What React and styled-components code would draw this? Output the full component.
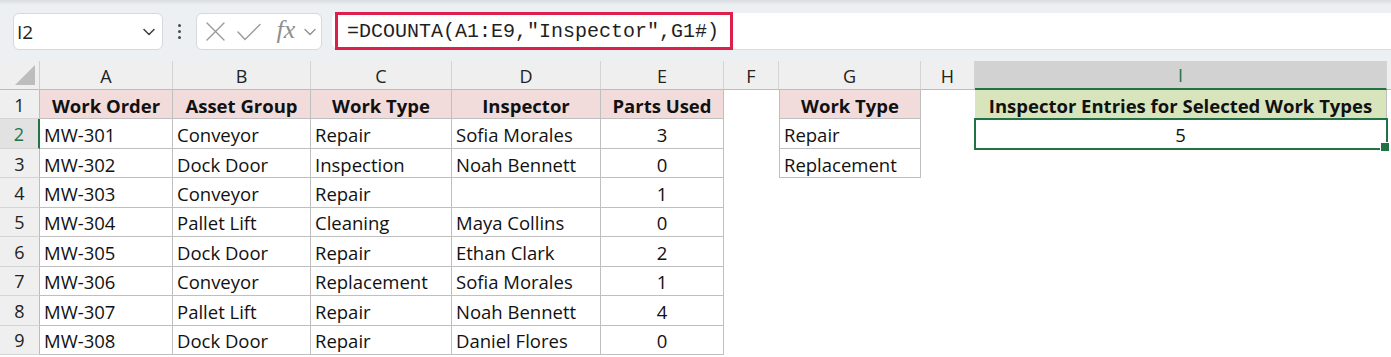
import React from "react";
import styled, { createGlobalStyle, css } from "styled-components";

const GlobalStyle = createGlobalStyle`
  html, body { margin: 0; padding: 0; background: #ffffff; }
  body { font-family: "Open Sans", "Noto Sans", sans-serif; color: #1f1f1f; overflow: hidden; }
  * { box-sizing: border-box; }
`;

const GREEN = "#217346";
const GRID = "#bfbfbf";

const Page = styled.div`
  width: 1391px;
  height: 357px;
  overflow: hidden;
  background: #fff;
`;

const Toolbar = styled.div`
  height: 61px;
  display: flex;
  align-items: flex-start;
  padding: 13px 0 0 13px;
  background: linear-gradient(#d9dcdf 0px, #e6e9ec 3px, #edf0f3 5px, #edf0f3 100%);
`;

const NameBox = styled.div`
  width: 150px;
  height: 37px;
  background: #fff;
  border: 1px solid #d6d9dc;
  border-radius: 6px;
  display: flex;
  align-items: center;
  justify-content: space-between;
  padding: 0 6px 0 3px;
  font-size: 19px;
  color: #222;
`;

const Dots = styled.div`
  width: 33px;
  height: 37px;
  display: flex;
  flex-direction: column;
  align-items: center;
  justify-content: center;
  gap: 3px;
  span {
    width: 3px;
    height: 3px;
    border-radius: 50%;
    background: #4a4a4a;
  }
`;

const FxBox = styled.div`
  width: 126px;
  height: 37px;
  background: #fff;
  border: 1px solid #d6d9dc;
  border-radius: 6px;
  display: flex;
  align-items: center;
  padding-left: 5px;
`;

const IconSlot = styled.div`
  width: ${(p) => p.$w}px;
  height: 37px;
  display: flex;
  align-items: center;
  justify-content: center;
`;

const Fx = styled.span`
  font-family: "Liberation Serif", "DejaVu Serif", serif;
  font-style: italic;
  font-size: 26px;
  color: #8f8f8f;
  line-height: 1;
  margin-top: -4px;
`;

const FormulaArea = styled.div`
  flex: 1;
  margin-left: 10px;
  height: 37px;
  background: #fff;
  border-radius: 6px 0 0 6px;
  border-bottom: 1px solid #d9dcdf;
  display: flex;
  align-items: stretch;
  padding-left: 3px;
`;

const Highlight = styled.div`
  width: 398px;
  height: 38px;
  margin-top: -1px;
  border: 3px solid #dc1f4b;
  display: flex;
  align-items: center;
  padding-left: 9px;
  font-family: "Liberation Mono", "DejaVu Sans Mono", monospace;
  font-size: 20px;
  color: #1f1f1f;
  white-space: pre;
`;

const Sheet = styled.div`
  display: grid;
  grid-template-columns: 40px 133px 138px 141px 149px 123px 55px 142px 54px 412px 1fr;
  grid-template-rows: 29px repeat(9, 29.45px);
`;

const cellText = css`
  font-size: 18.5px;
  white-space: nowrap;
  overflow: hidden;
`;

const Corner = styled.div`
  background: #efefef;
  border-right: 1px solid #cfcfcf;
  border-bottom: 1px solid #bcbcbc;
  position: relative;
  &::after {
    content: "";
    position: absolute;
    right: 4px;
    bottom: 4px;
    width: 0;
    height: 0;
    border-left: 20px solid transparent;
    border-bottom: 20px solid #bdbdbd;
  }
`;

const ColHead = styled.div`
  ${cellText}
  font-size: 18px;
  background: ${(p) => (p.$active ? "#d2d2d2" : "#efefef")};
  color: ${(p) => (p.$active ? GREEN : "#222")};
  border-right: 1px solid #d4d4d4;
  border-bottom: ${(p) => (p.$active ? `2px solid ${GREEN}` : "1px solid #bcbcbc")};
  display: flex;
  align-items: center;
  justify-content: center;
  padding-top: 1px;
`;

const RowHead = styled.div`
  ${cellText}
  font-size: 18px;
  background: ${(p) => (p.$active ? "#e2e2e2" : "#efefef")};
  color: ${(p) => (p.$active ? GREEN : "#222")};
  border-right: ${(p) => (p.$active ? `2px solid ${GREEN}` : "1px solid #bcbcbc")};
  border-bottom: 1px solid #d4d4d4;
  display: flex;
  align-items: center;
  justify-content: center;
  padding-top: 1px;
`;

const Cell = styled.div`
  ${cellText}
  display: flex;
  align-items: center;
  padding: 2px 4px 0 4px;
  justify-content: ${(p) => (p.$align === "center" ? "center" : "flex-start")};
  font-weight: ${(p) => (p.$bold ? 700 : 400)};
  background: ${(p) => p.$bg || "#fff"};
  color: #111;
  ${(p) =>
    p.$border &&
    css`
      border-right: 1px solid ${GRID};
      border-bottom: 1px solid ${GRID};
    `}
  ${(p) =>
    p.$bl &&
    css`
      border-left: 1px solid ${GRID};
    `}
  ${(p) =>
    p.$selected &&
    css`
      position: relative;
      z-index: 2;
      overflow: visible;
      outline: 2px solid ${GREEN};
      outline-offset: -1px;
      &::after {
        content: "";
        position: absolute;
        right: -4px;
        bottom: -4px;
        width: 8px;
        height: 8px;
        background: ${GREEN};
        border: 1px solid #fff;
      }
    `}
`;

const columns = ["A", "B", "C", "D", "E", "F", "G", "H", "I", ""];

const mainRows = [
  ["MW-301", "Conveyor", "Repair", "Sofia Morales", "3"],
  ["MW-302", "Dock Door", "Inspection", "Noah Bennett", "0"],
  ["MW-303", "Conveyor", "Repair", "", "1"],
  ["MW-304", "Pallet Lift", "Cleaning", "Maya Collins", "0"],
  ["MW-305", "Dock Door", "Repair", "Ethan Clark", "2"],
  ["MW-306", "Conveyor", "Replacement", "Sofia Morales", "1"],
  ["MW-307", "Pallet Lift", "Repair", "Noah Bennett", "4"],
  ["MW-308", "Dock Door", "Repair", "Daniel Flores", "0"],
];

const headers = ["Work Order", "Asset Group", "Work Type", "Inspector", "Parts Used"];
const criteria = ["Repair", "Replacement"];

const PINK = "#f2dcdb";
const LIME = "#d8e4bc";

function Chevron({ color = "#444", w = 14, sw = 1.6 }) {
  return (
    <svg width={w} height={w} viewBox="0 0 14 14" fill="none">
      <polyline points="2,4.5 7,9.5 12,4.5" stroke={color} strokeWidth={sw} strokeLinecap="round" strokeLinejoin="round" />
    </svg>
  );
}

function Row({ r }) {
  const cells = [];
  if (r === 1) {
    headers.forEach((h, i) =>
      cells.push(
        <Cell key={"h" + i} $border $bold $align="center" $bg={PINK}>
          {h}
        </Cell>
      )
    );
  } else {
    const d = mainRows[r - 2];
    d.forEach((v, i) =>
      cells.push(
        <Cell key={"d" + i} $border $align={i === 4 ? "center" : "left"}>
          {v}
        </Cell>
      )
    );
  }
  cells.push(<Cell key="F" />);
  if (r === 1) {
    cells.push(
      <Cell key="G" $border $bl $bold $align="center" $bg={PINK}>
        Work Type
      </Cell>
    );
  } else if (r <= 3) {
    cells.push(
      <Cell key="G" $border $bl>
        {criteria[r - 2]}
      </Cell>
    );
  } else {
    cells.push(<Cell key="G" />);
  }
  cells.push(<Cell key="H" />);
  if (r === 1) {
    cells.push(
      <Cell key="I" $border $bold $align="center" $bg={LIME}>
        Inspector Entries for Selected Work Types
      </Cell>
    );
  } else if (r === 2) {
    cells.push(
      <Cell key="I" $border $selected $align="center">
        5
      </Cell>
    );
  } else {
    cells.push(<Cell key="I" />);
  }
  cells.push(<Cell key="J" />);
  return (
    <>
      <RowHead $active={r === 2}>{r}</RowHead>
      {cells}
    </>
  );
}

export default function App() {
  return (
    <Page>
      <GlobalStyle />
      <Toolbar>
        <NameBox>
          <span>I2</span>
          <Chevron />
        </NameBox>
        <Dots>
          <span />
          <span />
          <span />
        </Dots>
        <FxBox>
          <IconSlot $w={26}>
            <svg width="21" height="21" viewBox="0 0 21 21" fill="none">
              <path d="M2 2 L19 19 M19 2 L2 19" stroke="#9a9a9a" strokeWidth="1.4" strokeLinecap="round" />
            </svg>
          </IconSlot>
          <IconSlot $w={42}>
            <svg width="26" height="20" viewBox="0 0 26 20" fill="none">
              <polyline points="2,10 9,17.5 24,2.5" stroke="#9a9a9a" strokeWidth="1.4" strokeLinecap="round" strokeLinejoin="round" />
            </svg>
          </IconSlot>
          <IconSlot $w={32}>
            <Fx>fx</Fx>
          </IconSlot>
          <IconSlot $w={16}>
            <Chevron color="#8f8f8f" sw={1.3} />
          </IconSlot>
        </FxBox>
        <FormulaArea>
          <Highlight>=DCOUNTA(A1:E9,"Inspector",G1#)</Highlight>
        </FormulaArea>
      </Toolbar>
      <Sheet>
        <Corner />
        {columns.map((c, i) => (
          <ColHead key={i} $active={c === "I"}>
            {c}
          </ColHead>
        ))}
        {[1, 2, 3, 4, 5, 6, 7, 8, 9].map((r) => (
          <Row key={r} r={r} />
        ))}
      </Sheet>
    </Page>
  );
}
